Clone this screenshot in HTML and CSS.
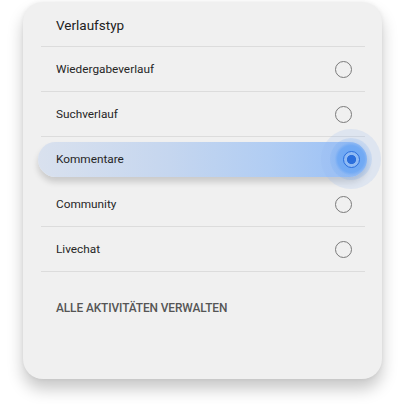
FILE: index.html
```html
<!DOCTYPE html>
<html lang="de">
<head>
<meta charset="utf-8">
<link rel="stylesheet" href="styles.css">
</head>
<body>
<div class="card">
  <div class="title">Verlaufstyp</div>
  <div class="list">
    <div class="row"><span>Wiedergabeverlauf</span><span class="radio"></span></div>
    <div class="row"><span>Suchverlauf</span><span class="radio"></span></div>
    <div class="row selected">
      <div class="pill"><span>Kommentare</span><span class="halo"><span class="radio on"></span></span></div>
    </div>
    <div class="row"><span>Community</span><span class="radio"></span></div>
    <div class="row"><span>Livechat</span><span class="radio"></span></div>
  </div>
  <div class="manage">ALLE AKTIVITÄTEN VERWALTEN</div>
</div>
</body>
</html>
```
FILE: styles.css
```css
html, body { margin: 0; padding: 0; background: #ffffff; }
body { width: 408px; height: 404px; overflow: hidden; font-family: Roboto, "Liberation Sans", sans-serif; }
.card {
  margin: 2px 0 0 23px;
  width: 359px;
  height: 377px;
  box-sizing: border-box;
  background: #f0f0f0;
  border-radius: 20px;
  box-shadow: 0 10px 16px rgba(0,0,0,0.22), 0 0 4px rgba(0,0,0,0.06);
  padding: 0 17px 0 18px;
}
.title {
  height: 44px;
  line-height: 47px;
  padding-left: 15px;
  font-size: 13.5px;
  color: #222;
  border-bottom: 1px solid #dcdcdc;
}
.row {
  height: 44px;
  border-bottom: 1px solid #dcdcdc;
  display: flex;
  align-items: center;
  justify-content: space-between;
  padding: 0 13px 0 15px;
  font-size: 11.8px;
  color: #262626;
}
.radio {
  width: 17px;
  height: 17px;
  border: 1.3px solid #7a7a7a;
  border-radius: 50%;
  box-sizing: border-box;
  display: block;
}
.row.selected {
  padding: 0;
  position: relative;
  border-bottom-color: transparent;
}
.pill {
  flex: 1;
  margin: 0 -2px 0 -3px;
  height: 35px;
  border-radius: 18px;
  display: flex;
  align-items: center;
  justify-content: space-between;
  padding-left: 18px;
  background: linear-gradient(90deg, #d9e1ee 0%, #c5d6ef 40%, #b1cdf3 70%, #98bff6 100%);
  box-shadow: 0 5px 6px rgba(0,0,0,0.16);
  color: #262626;
}
.halo {
  width: 42px;
  height: 42px;
  margin-right: -5px;
  border-radius: 50%;
  background: radial-gradient(circle, #6aa6f4 0%, #72aaf4 45%, rgba(120,170,240,0.4) 55%, rgba(150,185,240,0.25) 100%);
  box-shadow: 0 0 0 9px rgba(150,185,240,0.2);
  display: flex;
  align-items: center;
  justify-content: center;
}
.radio.on {
  border: 1.6px solid #2b6fdc;
  background: radial-gradient(circle, #2b6fdc 0 4.3px, #8fbaf4 4.8px);
}
.manage {
  padding: 29px 0 0 15px;
  font-size: 11.9px;
  font-weight: 500;
  color: #555;
  letter-spacing: -0.1px;
}
```
